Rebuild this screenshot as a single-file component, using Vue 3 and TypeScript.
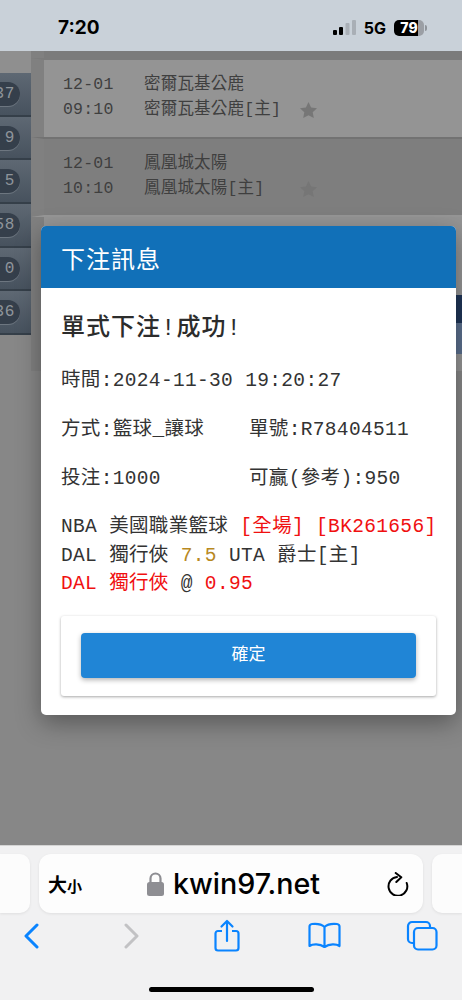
<template>
  <div class="phone">
    <header class="status">
      <span class="clock">7:20</span>
      <div class="status-right">
        <svg class="signal" width="23" height="15" viewBox="0 0 23 15">
          <rect x="0" y="10" width="4" height="5" rx="1" fill="#000" />
          <rect x="6" y="7" width="4" height="8" rx="1" fill="#000" />
          <rect x="12.500" y="3" width="4" height="12" rx="1" fill="#a9afb6" />
          <rect x="19" y="0" width="4" height="15" rx="1" fill="#a9afb6" />
        </svg>
        <span class="net">5G</span>
        <div class="battery">
          <span class="battery-level">79</span>
          <i class="battery-cap"></i>
        </div>
      </div>
    </header>

    <main class="page">
      <aside class="side">
        <div v-for="n in sideRows" :key="n" class="side-row">
          <span class="pill">{{ n }}</span>
        </div>
      </aside>
      <section class="list">
        <div class="list-top"></div>
        <div v-for="(g, i) in games" :key="g.team" class="game" :class="{ dark: i === 1 }">
          <div class="game-time">
            <span>12-01</span>
            <span>{{ g.time }}</span>
          </div>
          <div class="game-teams">
            <span>{{ g.team }}</span>
            <span>{{ g.team }}[主]</span>
          </div>
          <svg class="star" width="17" height="16" viewBox="0 0 17 16">
            <path d="M8.500 0l2.600 5.400 5.900.8-4.300 4.100 1.100 5.700-5.300-2.800-5.300 2.800 1.100-5.700L0 6.200l5.900-.8z" fill="#767676" />
          </svg>
        </div>
        <div class="game-empty"></div>
        <div class="edge-tabs">
          <i class="tab-a"></i>
          <i class="tab-b"></i>
        </div>
      </section>

      <div class="modal">
        <div class="modal-head">下注訊息</div>
        <div class="modal-body">
          <h2>單式下注!成功!</h2>
          <p class="line">時間:2024-11-30 19:20:27</p>
          <div class="two">
            <span>方式:籃球_讓球</span>
            <span>單號:R78404511</span>
          </div>
          <div class="two">
            <span>投注:1000</span>
            <span>可贏(參考):950</span>
          </div>
          <div class="detail">
            <div>NBA 美國職業籃球 <b class="red">[全場] [BK261656]</b></div>
            <div>DAL 獨行俠 <b class="gold">7.5</b> UTA 爵士[主]</div>
            <div><b class="red">DAL 獨行俠</b> @ <b class="red">0.95</b></div>
          </div>
          <div class="actions">
            <button class="ok" type="button">確定</button>
          </div>
        </div>
      </div>
    </main>

    <footer class="browser">
      <div class="tabs">
        <div class="tab-side left"></div>
        <div class="url">
          <span class="aa">大<small>小</small></span>
          <div class="host">
            <svg width="17" height="24" viewBox="0 0 17 24">
              <path d="M3.500 11V6.500a5 5 0 0 1 10 0V11" fill="none" stroke="#8e8e93" stroke-width="2.200" />
              <rect x="0" y="10" width="17" height="14" rx="2.500" fill="#8e8e93" />
            </svg>
            <span>kwin97.net</span>
          </div>
          <svg class="reload" width="22" height="24" viewBox="0 -2 22 24">
            <path d="M10 3A9.400 9.400 0 1 0 19.700 9" fill="none" stroke="#000" stroke-width="2" stroke-linecap="round" />
            <path d="M8.700-1l5.600 4.300-5 4.700" fill="none" stroke="#000" stroke-width="2" stroke-linecap="round" stroke-linejoin="round" />
          </svg>
        </div>
        <div class="tab-side right"></div>
      </div>
      <nav class="tools">
        <svg width="16" height="26" viewBox="0 0 16 26">
          <path d="M14 2L3 13l11 11" fill="none" stroke="#0a84ff" stroke-width="3" stroke-linecap="round" stroke-linejoin="round" />
        </svg>
        <svg width="16" height="26" viewBox="0 0 16 26">
          <path d="M2 2l11 11L2 24" fill="none" stroke="#c2c2c4" stroke-width="3" stroke-linecap="round" stroke-linejoin="round" />
        </svg>
        <svg width="26" height="33" viewBox="0 0 26 33">
          <path d="M8 12H4a2.500 2.500 0 0 0-2.500 2.500V29A2.500 2.500 0 0 0 4 31.500h18a2.500 2.500 0 0 0 2.500-2.500V14.500A2.500 2.500 0 0 0 22 12h-4" fill="none" stroke="#0a84ff" stroke-width="2.200" />
          <path d="M13 22V2M7.500 7.500L13 2l5.500 5.500" fill="none" stroke="#0a84ff" stroke-width="2.200" stroke-linecap="round" stroke-linejoin="round" />
        </svg>
        <svg width="33" height="27" viewBox="0 0 33 27">
          <path d="M16.500 5C14 2.500 9 1.500 4 2c-1.500.2-2.500 1-2.500 2.500V24c3-2 10-2.500 15 1 5-3.500 12-3 15-1V4.500C31.500 3 30.500 2.200 29 2c-5-.5-10 .5-12.500 3zM16.500 5v20" fill="none" stroke="#0a84ff" stroke-width="2.200" stroke-linejoin="round" />
        </svg>
        <svg width="32" height="31" viewBox="0 0 32 31">
          <rect x="8" y="8" width="22.500" height="21.500" rx="4" fill="none" stroke="#0a84ff" stroke-width="2.200" />
          <path d="M8 23H6a4 4 0 0 1-4-4V6a4 4 0 0 1 4-4h14a4 4 0 0 1 4 4v2" fill="none" stroke="#0a84ff" stroke-width="2.200" />
        </svg>
      </nav>
      <div class="home"></div>
    </footer>
  </div>
</template>

<script setup lang="ts">
const sideRows = ['37', '9', '5', '58', '0', '36']

const games = [
  { time: '09:10', team: '密爾瓦基公鹿' },
  { time: '10:10', team: '鳳凰城太陽' }
]
</script>

<style>
html,
body {
  margin: 0;
  background: #878787;
}
</style>

<style scoped>
.phone {
  width: 462px;
  height: 1000px;
  display: flex;
  flex-direction: column;
  overflow: hidden;
  font-family: "Liberation Mono", "Noto Sans CJK TC", monospace;
}

.status {
  height: 51px;
  flex: none;
  box-sizing: border-box;
  padding: 10px 38px 0 58px;
  display: flex;
  justify-content: space-between;
  align-items: center;
  background: #c9d1d9;
  font-family: Inter, "Liberation Sans", sans-serif;
  color: #000;
}

.clock {
  font-size: 19px;
  font-weight: 700;
  margin-top: -6px;
}

.status-right {
  display: flex;
  align-items: center;
  margin-top: -6px;
}

.signal {
  margin-right: 8px;
}

.net {
  font-size: 16px;
  font-weight: 700;
  margin-right: 8px;
}

.battery {
  position: relative;
  width: 30px;
  height: 16px;
  border-radius: 5px;
  background: linear-gradient(90deg, #000 0 79%, #9b9fa5 79%);
  text-align: center;
  color: #fff;
  font-size: 14px;
  font-weight: 800;
  line-height: 16px;
}

.battery-cap {
  position: absolute;
  right: -3px;
  top: 5px;
  width: 2px;
  height: 6px;
  background: #8f949a;
  border-radius: 0 2px 2px 0;
}

.page {
  position: relative;
  flex: 1;
  display: flex;
  background: #878787;
}

.side {
  width: 31px;
  flex: none;
  padding-top: 22px;
  display: flex;
  flex-direction: column;
  align-self: flex-start;
  background: #8f8f8f;
}

.side-row {
  height: 43.700px;
  box-sizing: border-box;
  display: flex;
  align-items: center;
  background: linear-gradient(180deg, #5e6873, #47525e);
  border-bottom: 2px solid #353f49;
}

.pill {
  width: 20px;
  height: 24px;
  display: flex;
  align-items: center;
  justify-content: flex-end;
  overflow: hidden;
  white-space: nowrap;
  box-sizing: border-box;
  padding-right: 5px;
  border-radius: 0 12px 12px 0;
  background: #353f4b;
  box-shadow: 0 1px 0 #6d7680;
  color: #8f959b;
  font-size: 16px;
  letter-spacing: 0.6px;
}

.list {
  position: relative;
  flex: 1;
  color: #3f3f3f;
  font-size: 16.500px;
  letter-spacing: 0.2px;
}

.list-top,
.game,
.game-empty {
  border-left: 13px solid #808080;
}

.list-top {
  height: 7px;
  background: #7b7b7b;
}

.game {
  height: 79px;
  box-sizing: border-box;
  display: flex;
  align-items: flex-start;
  padding: 12px 0 0 19px;
  background: #949494;
  border-top: 2px solid #7b7b7b;
}

.game.dark {
  background: #7e7e7e;
  border-top-color: #727272;
  border-bottom: 2px solid #969696;
  height: 80px;
}

.game-empty {
  height: 154px;
  background: #949494;
}

.game-time,
.game-teams {
  display: flex;
  flex-direction: column;
  line-height: 25px;
}

.game-time {
  width: 81px;
  flex: none;
}

.game-teams {
  width: 156px;
  flex: none;
}

.star {
  margin-top: 30px;
}

.edge-tabs {
  position: absolute;
  right: 0;
  top: 244px;
  width: 6px;
  display: flex;
  flex-direction: column;
}

.tab-a {
  height: 28px;
  background: #1f3557;
}

.tab-b {
  height: 31px;
  background: #5b6f8d;
}

.modal {
  position: absolute;
  left: 41px;
  top: 175px;
  width: 415px;
  height: 489px;
  border-radius: 5px;
  overflow: hidden;
  background: #fff;
  box-shadow: 0 8px 24px rgba(0, 0, 0, 0.35);
}

.modal-head {
  height: 62px;
  box-sizing: border-box;
  padding-left: 20px;
  display: flex;
  align-items: center;
  background: #1170b8;
  color: #fff;
  font-family: "Noto Sans CJK TC", sans-serif;
  font-size: 24px;
  letter-spacing: 1px;
}

.modal-body {
  padding: 26px 20px 0;
  color: #333;
  font-size: 19.500px;
  letter-spacing: 0.340px;
}

h2 {
  margin: 0 0 23px;
  font-family: "Liberation Mono", "Noto Sans CJK TC", sans-serif;
  font-size: 24px;
  line-height: 30px;
  font-weight: 500;
  letter-spacing: 1px;
  color: #2c2c2c;
}

.line {
  margin: 0;
  line-height: 28px;
}

.two {
  display: grid;
  grid-template-columns: 188px 1fr;
  margin-top: 21px;
  line-height: 28px;
}

.detail {
  margin-top: 20px;
  line-height: 28.500px;
  white-space: nowrap;
}

b {
  font-weight: 400;
}

.red {
  color: #f01010;
}

.gold {
  color: #b8891f;
}

.actions {
  margin-top: 17px;
  height: 80px;
  box-sizing: border-box;
  padding: 17px 20px 0;
  border-radius: 3px;
  background: #fff;
  box-shadow: 0 1px 3px rgba(0, 0, 0, 0.35);
}

.ok {
  width: 100%;
  height: 45px;
  box-sizing: border-box;
  padding: 0 0 6px;
  border: 0;
  border-radius: 4px;
  background: #2085d6;
  box-shadow: 0 2px 5px rgba(0, 0, 0, 0.3);
  color: #fff;
  font-family: "Noto Sans CJK TC", sans-serif;
  font-size: 17px;
  font-weight: 400;
}

.browser {
  position: relative;
  height: 155px;
  flex: none;
  box-sizing: border-box;
  padding-top: 8px;
  background: #f1f1f2;
  border-top: 1px solid #d4d4d4;
}

.tabs {
  display: flex;
  gap: 9px;
  justify-content: center;
}

.tab-side {
  width: 30px;
  flex: none;
  height: 59px;
  background: #fcfcfc;
  box-shadow: 0 1px 3px rgba(0, 0, 0, 0.08);
}

.tab-side.left {
  border-radius: 0 10px 10px 0;
}

.tab-side.right {
  border-radius: 10px 0 0 10px;
}

.url {
  width: 384px;
  flex: none;
  height: 59px;
  box-sizing: border-box;
  padding: 0 14px 0 9px;
  display: flex;
  align-items: center;
  justify-content: space-between;
  border-radius: 12px;
  background: #fdfdfd;
  box-shadow: 0 1px 3px rgba(0, 0, 0, 0.08);
  font-family: Inter, "Noto Sans CJK TC", sans-serif;
  color: #000;
}

.aa {
  font-family: "Noto Sans CJK TC", sans-serif;
  font-size: 19px;
  font-weight: 700;
}

.aa small {
  font-size: 15px;
}

.host {
  display: flex;
  align-items: center;
  gap: 9px;
  margin-left: -2px;
  font-size: 28.700px;
  font-weight: 500;
}

.tools {
  display: grid;
  grid-template-columns: 101px 90px 94px 98px 1fr;
  align-items: center;
  padding: 6px 0 0 23px;
}

.home {
  position: absolute;
  left: 149px;
  bottom: 8px;
  width: 165px;
  height: 5px;
  border-radius: 3px;
  background: #000;
}
</style>
